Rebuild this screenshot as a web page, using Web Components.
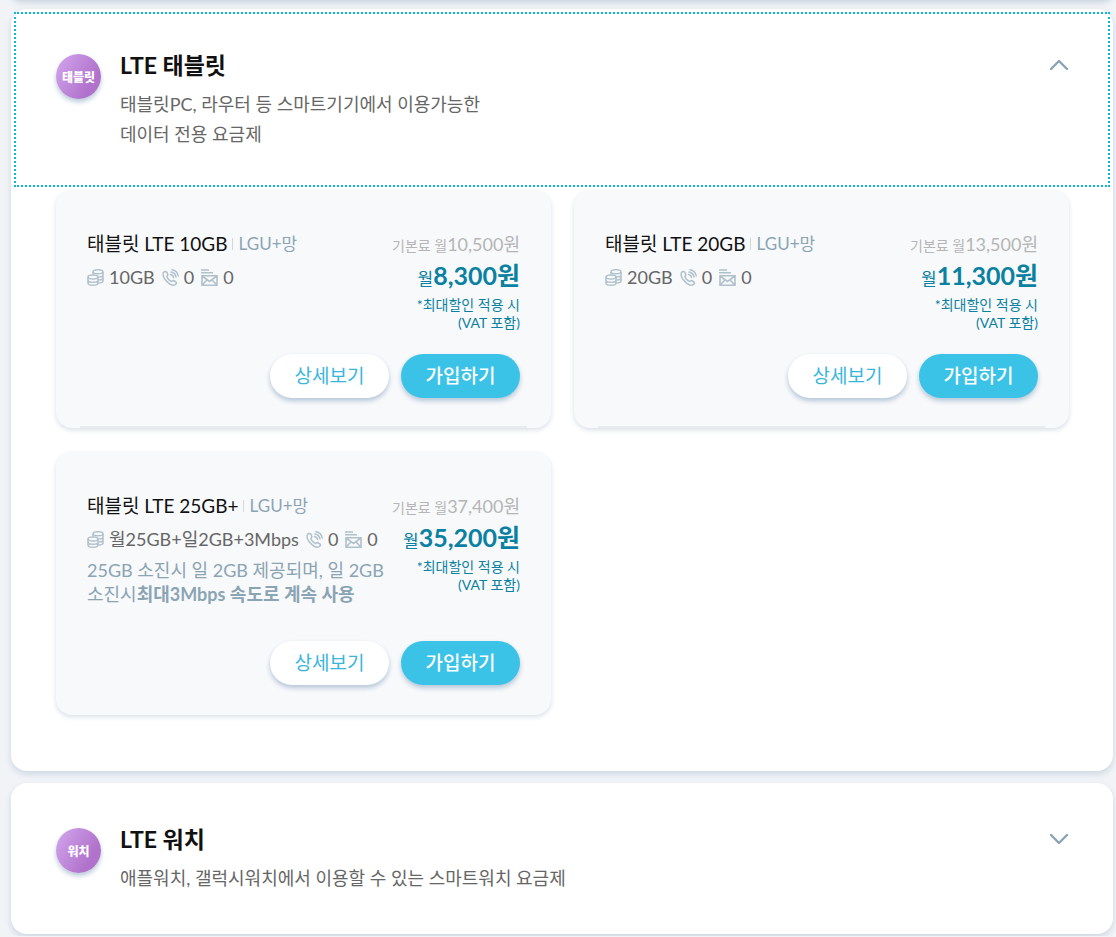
<!DOCTYPE html>
<html lang="ko">
<head>
<meta charset="utf-8">
<title>LTE 요금제</title>
<style>
  body { margin: 0; background: #f1f3f7; font-family: Lato, "Noto Sans CJK KR", sans-serif; color: #111; }
</style>
</head>
<body>
<plan-list>
  <plan-group badge="태블릿" heading="LTE 태블릿" open>
    <span slot="desc">태블릿PC, 라우터 등 스마트기기에서 이용가능한<br>데이터 전용 요금제</span>
    <plan-card name="태블릿 LTE 10GB" data="10GB" base="10,500" price="8,300" rule></plan-card>
    <plan-card name="태블릿 LTE 20GB" data="20GB" base="13,500" price="11,300" rule></plan-card>
    <plan-card name="태블릿 LTE 25GB+" data="월25GB+일2GB+3Mbps" base="37,400" price="35,200"><p>25GB 소진시 일 2GB 제공되며, 일 2GB<br>소진시<b>최대3Mbps 속도로 계속 사용</b></p></plan-card>
  </plan-group>
  <plan-group badge="워치" heading="LTE 워치">
    <span slot="desc">애플워치, 갤럭시워치에서 이용할 수 있는 스마트워치 요금제</span>
  </plan-group>
</plan-list>

<template id="list-tpl">
  <style>
    :host { display: block; padding: 0 3px 2px 11px; overflow: hidden; }
    .previous { height: 20px; margin-top: -20px; border-radius: 16px; background: #fff; box-shadow: 0 2px 6px #c3cfdc; }
    .stack { display: flex; flex-direction: column; gap: 12px; margin-top: 9px; }
  </style>
  <div class="previous"></div>
  <div class="stack"><slot></slot></div>
</template>

<template id="group-tpl">
  <style>
    :host { display: flow-root; background: #fff; border-radius: 16px; box-shadow: 0 3px 6px #cdd7e2; }
    .head { display: flex; align-items: flex-start; box-sizing: border-box; width: calc(100% - 6px); margin: 3px; padding: 35px 39px 36px 40px;
      border: 2px solid transparent; background: none; font: inherit; color: inherit; text-align: left; cursor: pointer; }
    :host([open]) .head { border: 2px dotted #0cb6de; }
    .badge { display: flex; align-items: center; justify-content: center; flex: none; width: 45px; height: 45px; margin: 5px 19px 0 0; border-radius: 50%;
      background: linear-gradient(120deg, #cf9fe9 10%, #b072cb 75%); box-shadow: 0 3px 5px #b9cbd8; color: #fff; font-size: 12px; font-weight: 900; }
    .copy { flex: 1; }
    .title { display: block; font-size: 23px; line-height: 32px; font-weight: 700; }
    .desc { display: block; margin-top: 8px; font-size: 18px; line-height: 30px; color: #666; }
    svg { flex: none; margin-top: 9px; }
    :host([open]) svg { transform: rotate(180deg); }
    .cards { display: none; grid-template-columns: 1fr 1fr; gap: 24px 23px; padding: 0 44px 56px 45px; }
    :host([open]) .cards { display: grid; }
  </style>
  <button class="head" type="button">
    <span class="badge"></span>
    <span class="copy"><span class="title"></span><span class="desc"><slot name="desc"></slot></span></span>
    <svg width="20" height="14" viewBox="0 0 20 14" fill="none" stroke="#8aa3b3" stroke-width="2.4" stroke-linecap="round" stroke-linejoin="round"><path d="M2 3l8 8 8-8"/></svg>
  </button>
  <div class="cards"><slot></slot></div>
</template>

<template id="card-tpl">
  <style>
    :host { display: flex; flex-direction: column; box-sizing: border-box; padding: 39px 31px 30px; border-radius: 16px; background: #f8f9fb;
      box-shadow: 0 2px 5px #d9dfe6; position: relative; }
    :host([rule])::after { content: ""; position: absolute; left: 24px; right: 24px; bottom: 0; height: 2px; background: #e9ecef; }
    .info { display: flex; justify-content: space-between; }
    .left { flex: 1; min-width: 0; }
    .name { display: flex; align-items: center; margin: 0; font-size: 19px; line-height: 30px; font-weight: 400; white-space: nowrap; }
    .net { margin-left: 4px; padding-left: 7px; color: #8ba4b4; font-size: 17px; line-height: 30px; background: linear-gradient(#d5d8db, #d5d8db) left center / 1px 12px no-repeat; }
    .usage { display: flex; align-items: center; margin-top: 3px; font-size: 18px; line-height: 30px; color: #666; white-space: nowrap; }
    .usage svg { flex: none; width: 17px; height: 17px; margin-right: 5px; }
    .usage span { margin-right: 7px; }
    ::slotted(p) { margin: 4px 0 13px; font-size: 18px; line-height: 24px; color: #8ba4b4; white-space: nowrap; }
    .cost { flex: none; text-align: right; color: #0b81a1; }
    .base { font-size: 14px; line-height: 30px; color: #b5b5b5; }
    .base b { font-size: 18px; font-weight: 400; }
    .price { font-size: 17px; line-height: 29px; }
    .price b { font-size: 25px; font-weight: 700; }
    .vat { margin-top: 3px; font-size: 14px; line-height: 18px; }
    .actions { display: flex; justify-content: flex-end; gap: 12px; margin-top: auto; padding-top: 22px; }
    button { width: 119px; height: 44px; padding: 0 0 4px; border: 0; border-radius: 22px; background: #fff; color: #38b6dc; font: inherit; font-size: 19px;
      box-shadow: 0 3px 5px #b5c6d8; cursor: pointer; }
    button.join { background: #3bc3e7; color: #fff; font-weight: 500; }
  </style>
  <div class="info">
    <div class="left">
      <h3 class="name"><span id="name"></span><span class="net">LGU+망</span></h3>
      <div class="usage">
        <svg viewBox="0 0 17 17" fill="none" stroke="#b1c1cc" stroke-width="1.5"><ellipse cx="11" cy="2.800" rx="5" ry="2"/><path d="M6 3v2.500M16 3v9c0 1-2 2-5 2M11 8c3 0 5-.5 5-2M11 11c3 0 5-.5 5-2"/><ellipse cx="6" cy="8" rx="5" ry="2"/><path d="M1 8v6c0 3 10 3 10 0V8M1 11c0 3 10 3 10 0"/></svg><span id="data"></span>
        <svg viewBox="0 0 17 17" fill="none" stroke="#b1c1cc" stroke-width="1.500" stroke-linecap="round" stroke-linejoin="round"><path d="M1.500 3.500C2.500 2 4 2 5 3.500l.8 1.800c.3 1-.9 1.400-1 2.200.8 2.500 2.400 4 4.700 5 .8 0 1.200-1.300 2.200-1l2 1.300c1.200 1 .8 2-.5 2.900-2.400 1.200-5.700-.4-8.400-3.200S.3 6.200 1.500 3.500zM8.500 5.500a3.500 3.500 0 0 1 3 3M9 3a6 6 0 0 1 5 5M10 .8a7.500 7.500 0 0 1 6.200 6.200"/></svg><span>0</span>
        <svg viewBox="0 0 17 17" fill="none" stroke="#b1c1cc" stroke-width="1.600"><path d="M0 1h8M0 3.800h12"/><path d="M1 6.800h15v9.400H1zM1 7l7.500 5.500L16 7M1 16l5-5M16 16l-5-5"/></svg><span>0</span>
      </div>
      <slot></slot>
    </div>
    <div class="cost">
      <div class="base">기본료 월<b id="base"></b></div>
      <div class="price">월<b id="price"></b></div>
      <div class="vat">*최대할인 적용 시<br>(VAT 포함)</div>
    </div>
  </div>
  <div class="actions"><button type="button">상세보기</button><button type="button" class="join">가입하기</button></div>
</template>

<script>
  class TemplateElement extends HTMLElement {
    constructor(id) {
      super();
      this.attachShadow({ mode: "open" }).append(document.getElementById(id).content.cloneNode(true));
    }
    put(selector, text) { this.shadowRoot.querySelector(selector).textContent = text; }
  }
  customElements.define("plan-list", class extends TemplateElement {
    constructor() { super("list-tpl"); }
  });
  customElements.define("plan-group", class extends TemplateElement {
    constructor() { super("group-tpl"); }
    connectedCallback() {
      this.put(".badge", this.getAttribute("badge"));
      this.put(".title", this.getAttribute("heading"));
      const head = this.shadowRoot.querySelector(".head");
      head.setAttribute("aria-expanded", this.hasAttribute("open"));
      head.onclick = () => head.setAttribute("aria-expanded", this.toggleAttribute("open"));
    }
  });
  customElements.define("plan-card", class extends TemplateElement {
    constructor() { super("card-tpl"); }
    connectedCallback() {
      this.put("#name", this.getAttribute("name"));
      this.put("#data", this.getAttribute("data"));
      this.put("#base", this.getAttribute("base") + "원");
      this.put("#price", this.getAttribute("price") + "원");
    }
  });
</script>
</body>
</html>
